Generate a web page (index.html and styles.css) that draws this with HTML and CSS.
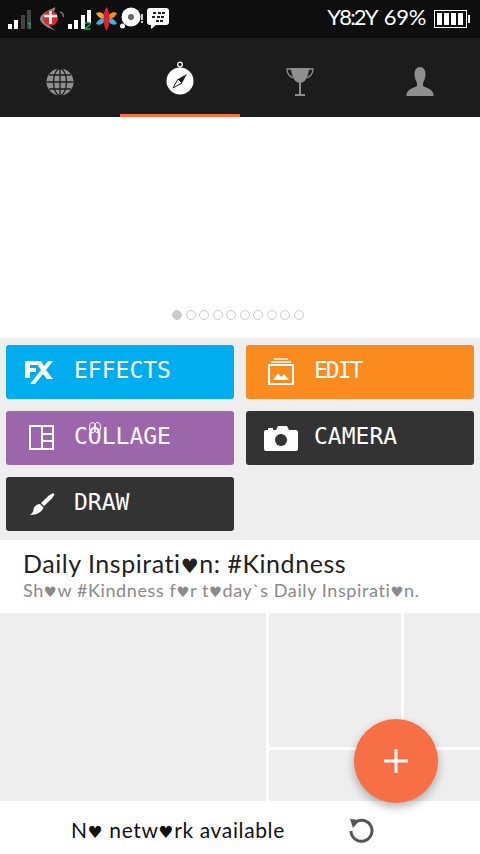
FILE: index.html
```html
<!DOCTYPE html>
<html lang="en">
<head>
    <meta charset="UTF-8">
    <meta name="viewport" content="width=device-width, initial-scale=1.0">
    <title>PicsArt</title>
    <link rel="stylesheet" href="styles.css">
</head>
<body>
    <div class="statusbar">
        <div class="status-icons">
            <svg class="ic-signal" width="24" height="22" viewBox="0 0 24 22">
                <rect x="0" y="14" width="4" height="5" fill="#fff"/>
                <rect x="6" y="10" width="4" height="9" fill="#fff"/>
                <rect x="13" y="5" width="4" height="14" fill="#444"/>
                <rect x="19" y="0" width="4" height="19" fill="#444"/>
                <path d="M20 14l2-1v6" fill="none" stroke="#1fa463" stroke-width="1.2"/>
            </svg>
            <svg class="ic-telkom" width="25" height="24" viewBox="0 0 25 24">
                <path d="M15 0c-1 1-2 1-4 2C4 5 0 9 0 12c0 3 5 7 9 9 3 1 5 2 7 3-3-2-7-5-9-9-2-4 2-9 8-12z" fill="#8a8a8a"/>
                <path d="M20 5c3 1 4 3 3 5" fill="none" stroke="#777" stroke-width="1.500"/>
                <circle cx="10.500" cy="11" r="7.500" fill="#e8232a"/>
                <path d="M10.500 4v7M4 9h13" stroke="#fff" stroke-width="2.500"/>
                <path d="M9 11h3v6H9z" fill="#fff"/>
            </svg>
            <svg class="ic-signal" width="24" height="22" viewBox="0 0 24 22">
                <rect x="0" y="14" width="4" height="5" fill="#fff"/>
                <rect x="6" y="10" width="4" height="9" fill="#fff"/>
                <rect x="13" y="5" width="4" height="14" fill="#fff"/>
                <rect x="19" y="0" width="4" height="13" fill="#fff"/>
                <path d="M17 14c1-2 5-2 5 0s-4 3-5 5h5.500" fill="none" stroke="#1fa463" stroke-width="1.500"/>
            </svg>
            <svg class="ic-flower" width="21" height="24" viewBox="0 0 21 24">
                <path d="M0 6c5-2 8 1 10 5-5 2-8-1-10-5z" fill="#f5a623"/>
                <path d="M21 17c-5 2-8-1-10-5 5-2 8 1 10 5z" fill="#3db0e6"/>
                <path d="M21 6c-5-2-8 1-10 5 5 2 8-1 10-5z" fill="#f58a23"/>
                <path d="M0 17c5 2 8-1 10-5-5-2-8 1-10 5z" fill="#3db0e6"/>
                <path d="M10.500 0c-4 5-4 18 0 24 4-6 4-19 0-24z" fill="#d8232a"/>
            </svg>
            <svg class="ic-disc" width="24" height="24" viewBox="0 0 24 24">
                <circle cx="11" cy="10" r="9.500" fill="#fff"/>
                <circle cx="11" cy="10" r="3" fill="#666"/>
                <circle cx="2.500" cy="19" r="2.500" fill="#fff"/>
                <rect x="21" y="7" width="2" height="6" fill="#ccc"/>
                <rect x="21" y="14" width="2" height="2" fill="#ccc"/>
            </svg>
            <svg class="ic-bbm" width="22" height="22" viewBox="0 0 22 22">
                <path d="M3 1h16a3 3 0 0 1 3 3v11a3 3 0 0 1-3 3H9l-5 4v-4H3a3 3 0 0 1-3-3V4a3 3 0 0 1 3-3z" fill="#fff"/>
                <path d="M6 5h3v2H6zM11 5h3v2h-3zM15 5h3v2h-3zM5 9h3v2H5zM10 9h3v2h-3zM14 9h3v2h-3zM9 13h3v2H9zM13 13h3v2h-3z" fill="#222"/>
            </svg>
        </div>
        <div class="status-right">
            <span class="clock">Y8:2Y</span>
            <span class="battery-text">69%</span>
            <div class="battery">
                <i></i><i></i><i></i><i></i>
            </div>
        </div>
    </div>

    <div class="tabs">
        <div class="tab">
            <svg width="28" height="28" viewBox="0 0 28 28">
                <circle cx="14" cy="14" r="13.500" fill="#8f8f8f"/>
                <g fill="none" stroke="#1c1c1c" stroke-width="1.300">
                    <ellipse cx="14" cy="14" rx="6.500" ry="13.500"/>
                    <path d="M14 0v28M1 14h26M3 7h22M3 21h22"/>
                </g>
            </svg>
        </div>
        <div class="tab active">
            <svg width="28" height="34" viewBox="0 0 28 34">
                <circle cx="14" cy="3.500" r="2.300" fill="none" stroke="#fff" stroke-width="1.300"/>
                <circle cx="14" cy="20" r="13.500" fill="#fff"/>
                <path d="M21 13l-9 5 4 4z" fill="#1c1c1c"/>
                <path d="M7 27l5-9 4 4z" fill="none" stroke="#1c1c1c" stroke-width="1"/>
            </svg>
        </div>
        <div class="tab">
            <svg width="28" height="30" viewBox="0 0 28 30">
                <path d="M5 1h18c0 2 0 4-1 6-1 5-4 9-8 9S7 12 6 7C5 5 5 3 5 1z" fill="#8f8f8f"/>
                <path d="M5 2H1c0 4 2 7 6 9M23 2h4c0 4-2 7-6 9" fill="none" stroke="#8f8f8f" stroke-width="1.300"/>
                <path d="M13 16h2v11h-2z" fill="#8f8f8f"/>
                <path d="M9 27h10v2H9z" fill="#8f8f8f"/>
            </svg>
        </div>
        <div class="tab">
            <svg width="28" height="30" viewBox="0 0 28 30">
                <path d="M14 0c3.500 0 5.500 3 5.500 7 0 4-1.500 7-2.500 9v3c4 2 9 3 10.500 8v2H.5v-2C2 22 7 21 11 19v-3c-1-2-2.500-5-2.500-9 0-4 2-7 5.500-7z" fill="#8f8f8f"/>
            </svg>
        </div>
    </div>

    <div class="banner">
        <div class="dots">
            <span class="dot on"></span>
            <span class="dot"></span>
            <span class="dot"></span>
            <span class="dot"></span>
            <span class="dot"></span>
            <span class="dot"></span>
            <span class="dot"></span>
            <span class="dot"></span>
            <span class="dot"></span>
            <span class="dot"></span>
        </div>
    </div>

    <div class="actions">
        <a class="action blue">
            <svg width="30" height="26" viewBox="0 0 30 26">
                <path d="M-1 2h12v4H4v3h6v4H4v6h-5z" fill="#fff"/>
                <path d="M9 2h6l3 5 4-5h5l-7 9 7 9h-6l-4-5-8 10H4l11-14z" fill="#fff"/>
            </svg>
            <span>EFFECTS</span>
        </a>
        <a class="action orange">
            <svg width="30" height="28" viewBox="0 0 30 28">
                <path d="M8 1h14M5 4h20" stroke="#fff" stroke-width="1.300"/>
                <rect x="3" y="7" width="24" height="19" fill="none" stroke="#fff" stroke-width="2"/>
                <path d="M7 22l5-7 3 4 3-3 5 6z" fill="#fff"/>
            </svg>
            <span class="tight">EDIT</span>
        </a>
        <a class="action purple">
            <svg width="30" height="26" viewBox="0 0 30 26">
                <rect x="4" y="1" width="23" height="23" fill="none" stroke="#fff" stroke-width="2"/>
                <path d="M16 1v23M16 9h11M16 16h11" stroke="#fff" stroke-width="2"/>
            </svg>
            <span>C<b class="bunny">O</b>LLAGE</span>
        </a>
        <a class="action dark">
            <svg width="34" height="26" viewBox="0 0 34 26">
                <path d="M2 5h2V3h5v2h3l2-4h9l2 4h7a2 2 0 0 1 2 2v17a2 2 0 0 1-2 2H2a2 2 0 0 1-2-2V7a2 2 0 0 1 2-2z" fill="#fff"/>
                <circle cx="17" cy="15" r="6" fill="#333"/>
            </svg>
            <span>CAMERA</span>
        </a>
        <a class="action dark">
            <svg width="30" height="24" viewBox="0 0 30 24">
                <path d="M27 1l1.500 1.500-2.500 4-8 7.500-3-3 8-7.500z" fill="#fff"/>
                <path d="M14 12l3.500 3.500C16 20 11 23 4 23c2-2 3.500-3 3.500-5 0-3 3-6 6.500-6z" fill="#fff"/>
            </svg>
            <span>DRAW</span>
        </a>
    </div>

    <div class="inspiration">
        <div class="insp-title">Daily Inspirati<span class="heart">♥</span>n: #Kindness</div>
        <div class="insp-sub">Sh<span class="heart">♥</span>w #Kindness f<span class="heart">♥</span>r t<span class="heart">♥</span>day`s Daily Inspirati<span class="heart">♥</span>n.</div>
    </div>

    <div class="gallery">
        <div class="tile big"></div>
        <div class="tile"></div>
        <div class="tile"></div>
        <div class="tile wide"></div>
        <button class="fab">
            <svg width="24" height="24" viewBox="0 0 24 24">
                <path d="M10.500 0h3v10.500H24v3H13.500V24h-3V13.500H0v-3h10.500z" fill="#fff"/>
            </svg>
        </button>
    </div>

    <div class="netbar">
        <span class="net-text">N<span class="heart">♥</span> netw<span class="heart">♥</span>rk available</span>
        <svg class="refresh" width="26" height="26" viewBox="0 0 26 26">
            <path d="M7 5.500A10.500 10.500 0 1 1 3 14" fill="none" stroke="#555" stroke-width="3"/>
            <path d="M2 2l10 1-7 8z" fill="#555"/>
        </svg>
    </div>
</body>
</html>
```

FILE: styles.css
```css
* {
    box-sizing: border-box;
}

body {
    margin: 0;
    width: 480px;
    height: 854px;
    overflow: hidden;
    display: flex;
    flex-direction: column;
    background-color: #fff;
    font-family: Lato, "Liberation Sans", sans-serif;
}

/* status bar */
.statusbar {
    height: 38px;
    background-color: #0e0e0e;
    display: flex;
    justify-content: space-between;
    padding: 7px 13px 0 8px;
    color: #fff;
}

.status-icons {
    display: flex;
    align-items: flex-start;
    gap: 3px;
}

.ic-signal {
    margin-top: 3px;
}

.ic-telkom {
    margin-left: 5px;
}

.ic-flower {
    margin-left: 1px;
}

.status-right {
    display: flex;
    align-items: flex-start;
    font-size: 22px;
    line-height: 20px;
}

.clock {
    margin-right: 7px;
    letter-spacing: -1.800px;
}

.battery-text {
    margin-right: 8px;
    letter-spacing: -0.300px;
}

.battery {
    width: 33px;
    height: 18px;
    margin-top: 3px;
    border: 1px solid #fff;
    display: flex;
    gap: 2px;
    padding: 2px;
    position: relative;
}

.battery::after {
    content: "";
    position: absolute;
    right: -4px;
    top: 4px;
    width: 2px;
    height: 8px;
    background-color: #fff;
}

.battery i {
    width: 5px;
    background-color: #fff;
}

/* tabs */
.tabs {
    height: 79px;
    background-color: #1c1c1c;
    display: flex;
}

.tab {
    flex: 1;
    display: flex;
    align-items: center;
    justify-content: center;
    padding-top: 8px;
}

.tab.active {
    border-bottom: 3px solid #f66f45;
    padding-top: 3px;
}

/* banner */
.banner {
    height: 221px;
    background-color: #fff;
    display: flex;
    align-items: flex-end;
    justify-content: center;
    padding: 0 4px 18px 0;
}

.dots {
    display: flex;
    gap: 3.500px;
}

.dot {
    width: 10px;
    height: 10px;
    border: 1.500px solid #ccc;
    border-radius: 50%;
}

.dot.on {
    background-color: #ccc;
}

/* buttons */
.actions {
    height: 202px;
    background-color: #eee;
    display: grid;
    grid-template-columns: 1fr 1fr;
    grid-auto-rows: 54px;
    gap: 12px;
    padding: 7px 6px 0;
}

.action {
    display: flex;
    align-items: center;
    border-radius: 3px;
    color: #fff;
    font-family: "DejaVu Sans Mono", monospace;
    font-size: 23px;
    padding-left: 18px;
}

.action svg {
    flex: 0 0 34px;
    margin-right: 16px;
}

.action span {
    margin-top: -5px;
}

.action .tight {
    letter-spacing: -2px;
}

.action b {
    font-weight: normal;
}

.bunny {
    position: relative;
}

.bunny::before,
.bunny::after {
    content: "";
    position: absolute;
    top: -1px;
    width: 5px;
    height: 9px;
    border: 1.500px solid #fff;
    border-radius: 50%;
}

.bunny::before {
    left: 1px;
}

.bunny::after {
    right: 1px;
}

.blue {
    background-color: #00aeef;
}

.orange {
    background-color: #fb8a1f;
}

.purple {
    background-color: #9c66ab;
}

.dark {
    background-color: #333;
}

/* daily inspiration */
.inspiration {
    height: 73px;
    background-color: #fff;
    padding: 9px 23px 0;
}

.insp-title {
    font-size: 25px;
    line-height: 28px;
    letter-spacing: 0.550px;
    color: #222;
}

.insp-sub {
    font-size: 18px;
    line-height: 20px;
    letter-spacing: 0.600px;
    color: #8a8a8a;
}

.heart {
    font-family: "DejaVu Sans", sans-serif;
    font-size: 0.8em;
}

/* gallery */
.gallery {
    height: 188px;
    background-color: #fff;
    display: grid;
    grid-template-columns: 266px 132px 76px;
    grid-template-rows: 134px 51px;
    gap: 3px;
    position: relative;
}

.tile {
    background-color: #eee;
}

.tile.big {
    grid-row: span 2;
}

.tile.wide {
    grid-column: span 2;
}

.fab {
    position: absolute;
    left: 354px;
    top: 106px;
    width: 84px;
    height: 84px;
    border: none;
    border-radius: 50%;
    background-color: #f66f45;
    box-shadow: 0 4px 10px rgba(0, 0, 0, 0.3);
    display: flex;
    align-items: center;
    justify-content: center;
    padding: 0;
}

/* network bar */
.netbar {
    height: 53px;
    display: flex;
    align-items: center;
    padding-left: 71px;
    background-color: #fff;
}

.net-text {
    width: 277px;
    font-size: 21px;
    letter-spacing: 0.620px;
    color: #111;
    margin-top: 3px;
}

.refresh {
    margin-top: 4px;
}
```
